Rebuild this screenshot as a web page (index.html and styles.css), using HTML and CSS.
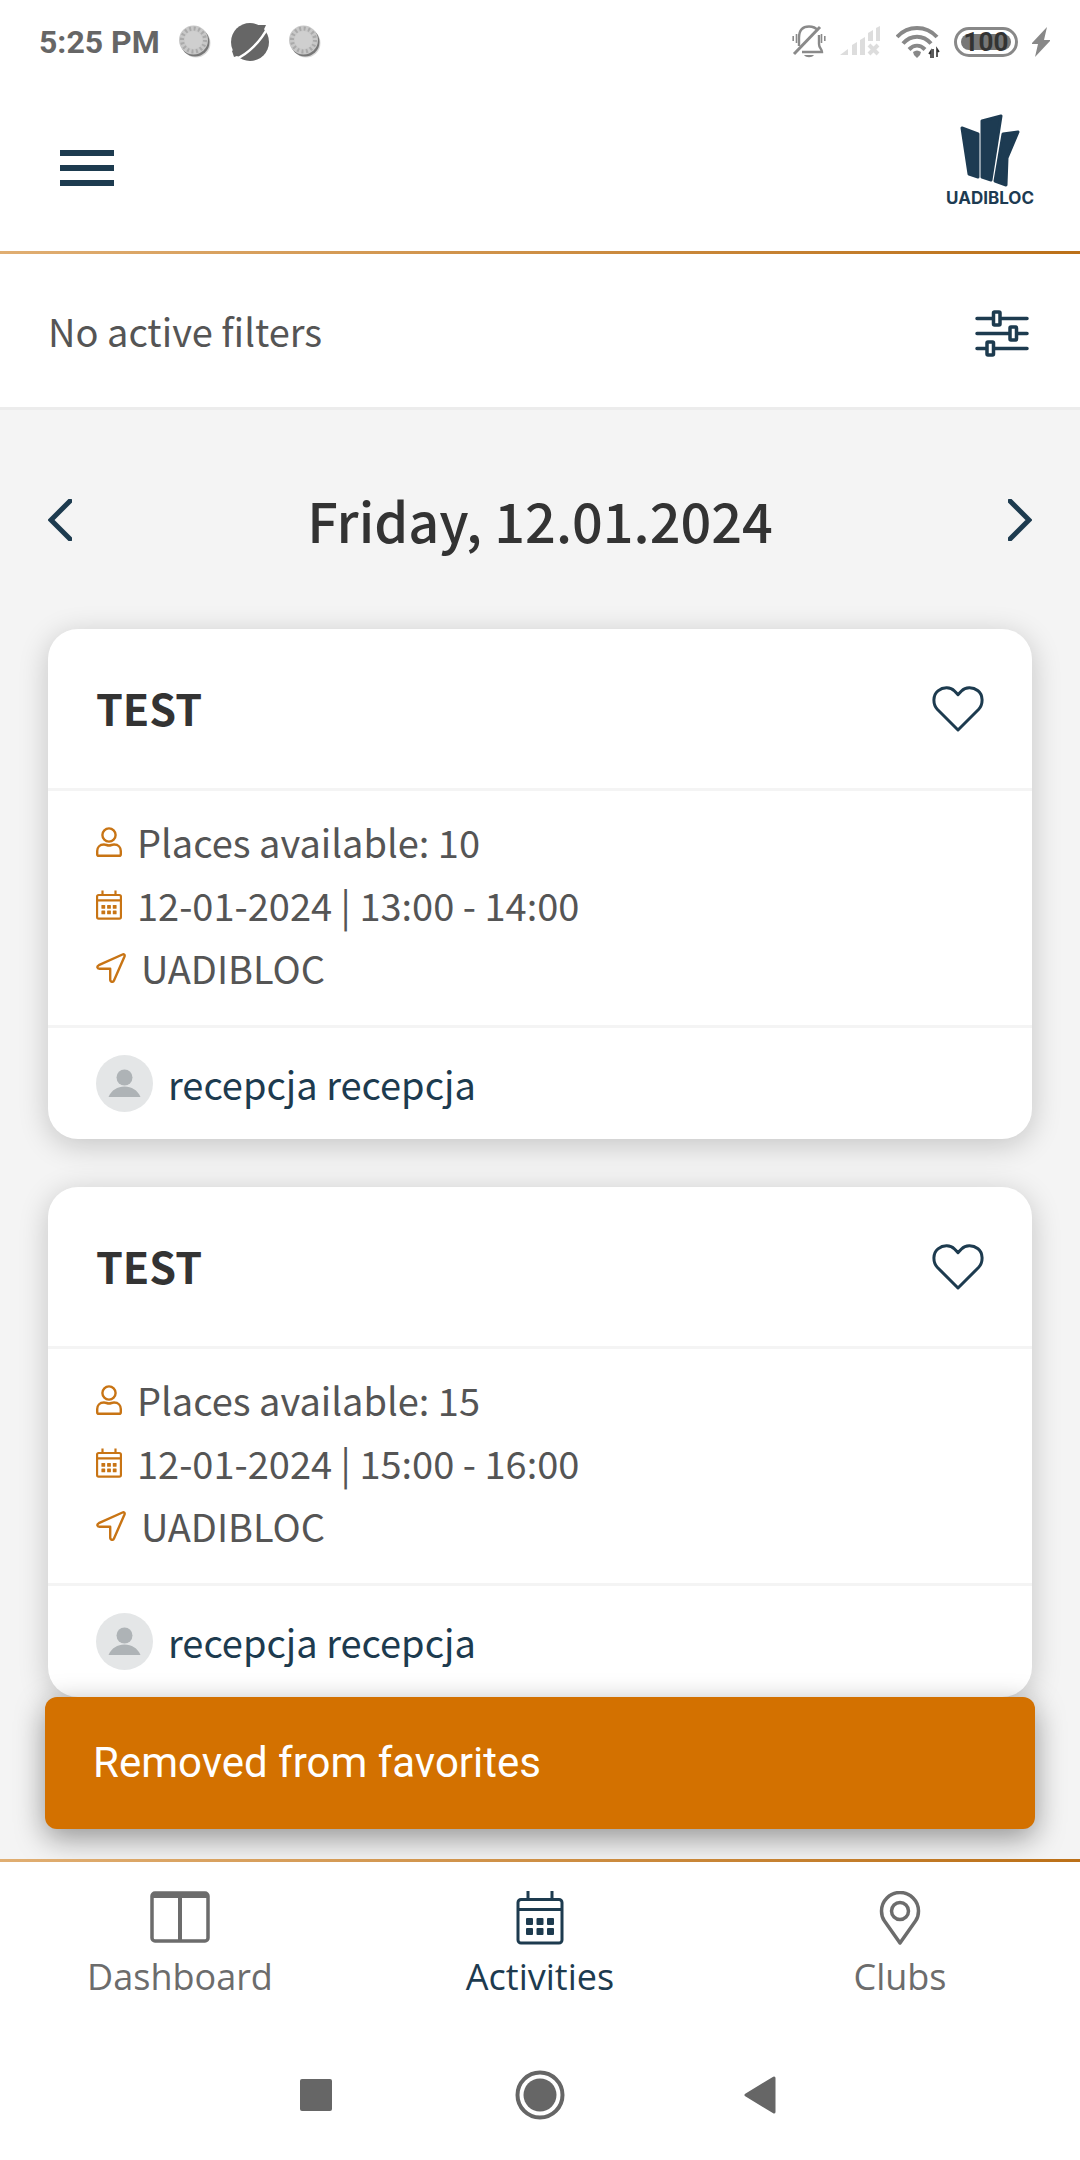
FILE: index.html
```
<!DOCTYPE html>
<html lang="en">
<head>
  <meta charset="UTF-8">
  <meta name="viewport" content="width=device-width, initial-scale=1.0">
  <title>Activities - UADIBLOC</title>
  <link rel="stylesheet" href="styles.css">
</head>
<body>
  <!-- shared icons -->
  <svg class="sprite" aria-hidden="true">
    <symbol id="user" viewBox="0 0 26 30">
      <g fill="none" stroke="currentColor" stroke-width="2.4">
        <circle cx="13" cy="8" r="6.6"/>
        <path d="M8 17.500c2 0 3 1 5 1s3-1 5-1c4.500 0 6.800 3.200 6.800 6.500v3.200c0 1-.6 1.600-1.600 1.600H2.800c-1 0-1.600-.6-1.600-1.600V24c0-3.300 2.300-6.500 6.800-6.500z"/>
      </g>
    </symbol>
    <symbol id="calendar" viewBox="0 0 48 54">
      <g fill="none" stroke="currentColor">
        <rect x="2" y="8.500" width="44" height="43.500" rx="3"/>
        <path d="M2 18.500h44M12 0v8M36 0v8"/>
      </g>
      <g fill="currentColor" stroke="none">
        <rect x="10" y="27" width="7" height="7" rx="1"/>
        <rect x="20.500" y="27" width="7" height="7" rx="1"/>
        <rect x="31" y="27" width="7" height="7" rx="1"/>
        <rect x="10" y="37" width="7" height="7" rx="1"/>
        <rect x="20.500" y="37" width="7" height="7" rx="1"/>
        <rect x="31" y="37" width="7" height="7" rx="1"/>
      </g>
    </symbol>
    <symbol id="arrow" viewBox="0 0 30 30">
      <path d="M26.500 1.500 2.800 12.200c-2.200 1.100-1.800 3.600.6 3.600h10.800v10.800c0 2.600 2.800 3 3.800.8L28.500 3.500c.6-1.500-.6-2.600-2-2z" fill="none" stroke="currentColor" stroke-width="2.4" stroke-linejoin="round"/>
    </symbol>
    <symbol id="heart" viewBox="0 0 52 46">
      <path d="M26 44 5.500 23.500C.5 18 .8 9 6 4.800 11.500 .5 18.500 1 22.500 5L26 8.600 29.500 5C33.500 1 40.500 .5 46 4.800 51.200 9 51.500 18 46.500 23.500z" fill="none" stroke="currentColor" stroke-width="3" stroke-linejoin="round"/>
    </symbol>
    <symbol id="avatar" viewBox="0 0 57 57">
      <circle cx="28.500" cy="28.500" r="28.500" fill="#e4e6e7"/>
      <circle cx="28.500" cy="22.500" r="8" fill="#aeb3b6"/>
      <path d="M12.500 42c3-7 9-10.500 16-10.500S41.500 35 44.500 42z" fill="#aeb3b6"/>
    </symbol>
    <symbol id="coin" viewBox="0 0 32 34">
      <circle cx="17" cy="18" r="14.500" fill="#d8d8d8"/>
      <circle cx="16" cy="17" r="14.500" fill="#777"/>
      <circle cx="14.500" cy="15" r="14.500" fill="#c8c8c8"/>
      <circle cx="14.500" cy="15" r="11.500" fill="none" stroke="#aaa" stroke-width="4" stroke-dasharray="2 2.500"/>
      <circle cx="14.500" cy="15" r="9" fill="#cfcfcf"/>
    </symbol>
  </svg>

  <div class="status-bar">
    <div class="status-left">
      <span class="clock">5:25 PM</span>
      <svg width="32" height="34"><use href="#coin"/></svg>
      <svg width="40" height="40" viewBox="0 0 40 40">
        <circle cx="20" cy="20" r="19" fill="#666"/>
        <path d="M6 37C18 32 31 19 38 5" fill="none" stroke="#fff" stroke-width="2.500"/>
        <path d="M2 29 4 35C17 31 30 18 36 3L28 3z" fill="#666"/>
      </svg>
      <svg width="32" height="34"><use href="#coin"/></svg>
    </div>
    <div class="status-right">
      <svg width="34" height="34" viewBox="0 0 34 34">
        <g fill="none" stroke="#8a8a8a" stroke-width="2.4">
          <path d="M7 21V13C7 5 11 1.500 17 1.500c4 0 7 1.500 9 4M27 10v9c0 4 3 5 3 8H10"/>
          <path d="M2 29 28 2" stroke-width="3"/>
          <path d="M1.200 11v5M4.500 9v9M29.500 9v9M32.800 11v5" stroke-width="1.6"/>
        </g>
        <path d="M12 30h10c-2 3-8 3-10 0z" fill="#8a8a8a"/>
      </svg>
      <svg width="42" height="32" viewBox="0 0 42 32">
        <path d="M0 29l8-6v6zM12 19l5-3v13h-5zM20 14l5-3v18h-5zM28 7l5-3v11h-5zM36 2l4-2v15h-4z" fill="#ddd"/>
        <path d="M29 19l9 9M38 19l-9 9" stroke="#ddd" stroke-width="4"/>
      </svg>
      <svg width="44" height="36" viewBox="0 0 44 36">
        <g fill="none" stroke="#888" stroke-width="4">
          <path d="M1 13C12 1 30 1 41 13M7 19.500c8-9 20-9 28 0M13 25.500c5-5 11-5 16 0"/>
        </g>
        <path d="M17 28q4-3 8 0l-1 3-3 3-3-3z" fill="#888"/>
        <path d="M35 34v-7l-2 3M37 25v9M41 33v-8l2 3" fill="none" stroke="#333" stroke-width="1.600"/>
      </svg>
      <span class="battery"><span class="battery-level">100</span></span>
      <svg width="18" height="30" viewBox="1 0 18 30">
        <path d="M16 0 0 17h7L4 30 20 13h-7z" fill="#888"/>
      </svg>
    </div>
  </div>

  <header class="header">
    <button class="menu-btn" aria-label="Menu">
      <span></span><span></span><span></span>
    </button>
    <a class="logo" href="#">
      <svg width="60" height="74" viewBox="0 0 60 74">
        <g fill="#1d3b52" stroke="#1d3b52" stroke-width="3" stroke-linejoin="round">
          <path d="M2 14 18 20V63L9 60z"/>
          <path d="M22 7 41 2 31 66 22 63z"/>
          <path d="M43 20 58 18 47 44 46 71 35 67z"/>
        </g>
      </svg>
      <span>UADIBLOC</span>
    </a>
  </header>

  <div class="filters">
    <span>No active filters</span>
    <button aria-label="Filters">
      <svg width="54" height="54" viewBox="0 -6 54 54">
        <path d="M2 8.500h50M2 23.500h50M2 38.500h50" stroke="#1d3b4f" stroke-width="3.500" stroke-linecap="round"/>
        <g fill="#fff" stroke="#1d3b4f" stroke-width="3.500">
          <rect x="18.500" y="2" width="6.500" height="13" rx="1"/>
          <rect x="35" y="17" width="6.500" height="13" rx="1"/>
          <rect x="12" y="32" width="6.500" height="13" rx="1"/>
        </g>
      </svg>
    </button>
  </div>

  <main class="content">
    <div class="date-nav">
      <button aria-label="Previous day">
        <svg width="24" height="42" viewBox="0 0 24 42"><path d="M22 2 3 21 22 40"/></svg>
      </button>
      <h1>Friday, 12.01.2024</h1>
      <button aria-label="Next day">
        <svg width="24" height="42" viewBox="0 0 24 42"><path d="M2 2 21 21 2 40"/></svg>
      </button>
    </div>

    <article class="card">
      <div class="card-head">
        <h2>TEST</h2>
        <button aria-label="Add to favorites"><svg width="52" height="46"><use href="#heart"/></svg></button>
      </div>
      <ul class="card-info">
        <li><svg width="26" height="30"><use href="#user"/></svg>Places available: 10</li>
        <li><svg width="26" height="30"><use href="#calendar"/></svg>12-01-2024 | 13:00 - 14:00</li>
        <li><svg width="30" height="30"><use href="#arrow"/></svg>UADIBLOC</li>
      </ul>
      <a class="card-trainer" href="#">
        <svg width="57" height="57"><use href="#avatar"/></svg>
        recepcja recepcja
      </a>
    </article>

    <article class="card">
      <div class="card-head">
        <h2>TEST</h2>
        <button aria-label="Add to favorites"><svg width="52" height="46"><use href="#heart"/></svg></button>
      </div>
      <ul class="card-info">
        <li><svg width="26" height="30"><use href="#user"/></svg>Places available: 15</li>
        <li><svg width="26" height="30"><use href="#calendar"/></svg>12-01-2024 | 15:00 - 16:00</li>
        <li><svg width="30" height="30"><use href="#arrow"/></svg>UADIBLOC</li>
      </ul>
      <a class="card-trainer" href="#">
        <svg width="57" height="57"><use href="#avatar"/></svg>
        recepcja recepcja
      </a>
    </article>

    <div class="toast" role="status">Removed from favorites</div>
  </main>

  <nav class="tabs">
    <a href="#">
      <svg width="60" height="54" viewBox="0 0 60 54">
        <rect x="2" y="2" width="56" height="48" rx="3" fill="none" stroke="currentColor" stroke-width="3.500"/>
        <path d="M30 4v46M2 5h56" stroke="currentColor" stroke-width="4"/>
      </svg>
      Dashboard
    </a>
    <a class="active" href="#">
      <svg width="48" height="54"><use href="#calendar"/></svg>
      Activities
    </a>
    <a href="#">
      <svg width="42" height="54" viewBox="0 0 42 54">
        <g fill="none" stroke="currentColor" stroke-width="3.500" stroke-linejoin="round">
          <path d="M21 52 5.500 30C2.500 26 2.500 23 2.500 20a18.500 18.500 0 0 1 37 0c0 3 0 6-3 10z"/>
          <circle cx="21" cy="20" r="8.500"/>
        </g>
      </svg>
      Clubs
    </a>
  </nav>

  <div class="system-bar">
    <button aria-label="Recent apps">
      <svg width="50" height="50" viewBox="0 0 50 50"><rect x="9" y="9" width="32" height="32" rx="2" fill="#666"/></svg>
    </button>
    <button aria-label="Home">
      <svg width="50" height="50" viewBox="0 0 50 50">
        <circle cx="25" cy="25" r="22.500" fill="none" stroke="#666" stroke-width="4"/>
        <circle cx="25" cy="25" r="16.500" fill="#666"/>
      </svg>
    </button>
    <button aria-label="Back">
      <svg width="50" height="50" viewBox="0 0 50 50"><path d="M7 25 35 8V42z" fill="#666" stroke="#666" stroke-width="3" stroke-linejoin="round"/></svg>
    </button>
  </div>
</body>
</html>
```

FILE: styles.css
```
* {
  box-sizing: border-box;
}
body {
  margin: 0;
  min-height: 100vh;
  display: flex;
  flex-direction: column;
  background: #fff;
  color: #555;
  font-family: "Noto Sans CJK SC", "Noto Sans", sans-serif;
  font-size: 38px;
}
h1, h2, ul {
  margin: 0;
  padding: 0;
}
button {
  padding: 0;
  border: 0;
  background: none;
  color: inherit;
  cursor: pointer;
}
a {
  color: inherit;
  text-decoration: none;
}
svg {
  display: block;
  flex-shrink: 0;
}
.sprite {
  position: absolute;
  width: 0;
  height: 0;
}

/* phone status bar */
.status-bar {
  display: flex;
  justify-content: space-between;
  align-items: center;
  height: 84px;
  padding: 0 30px 0 39px;
}
.status-left {
  display: flex;
  align-items: center;
  gap: 19px;
}
.clock {
  color: #666;
  font-family: Roboto, sans-serif;
  font-size: 32px;
  font-weight: 700;
  line-height: 40px;
}
.status-right {
  display: flex;
  align-items: center;
  gap: 14px;
}
.battery {
  width: 64px;
  height: 30px;
  padding: 4px;
  border: 3px solid #888;
  border-radius: 15px;
}
.battery-level {
  display: block;
  border-radius: 8px;
  background: #777;
  color: #333;
  font-family: Roboto, sans-serif;
  font-size: 26px;
  font-weight: 700;
  line-height: 16px;
  text-align: center;
}

/* header */
.header {
  display: flex;
  justify-content: space-between;
  align-items: center;
  height: 170px;
  padding: 0 46px 0 60px;
  border-bottom: 3px solid;
  border-image: linear-gradient(90deg, #e0ae72, #bb7018) 1;
}
.menu-btn {
  display: flex;
  flex-direction: column;
  gap: 9px;
}
.menu-btn span {
  width: 54px;
  height: 6px;
  background: #1d3b4f;
}
.logo {
  display: flex;
  flex-direction: column;
  align-items: center;
  padding-bottom: 14px;
  color: #1d3b52;
  font-family: Inter, sans-serif;
  font-size: 17px;
  font-weight: 700;
  line-height: 20px;
}

.filters {
  display: flex;
  justify-content: space-between;
  align-items: center;
  height: 156px;
  padding: 0 51px 0 48px;
  border-bottom: 3px solid #ececec;
}

/* activities list */
.content {
  position: relative;
  flex: 1;
  padding: 72px 48px 0;
  background: #f4f4f4;
  overflow: hidden;
}
.date-nav {
  display: flex;
  justify-content: space-between;
  align-items: center;
  height: 76px;
  margin-bottom: 71px;
}
.date-nav path {
  fill: none;
  stroke: #1d3b4f;
  stroke-width: 5px;
  stroke-linecap: round;
}
h1 {
  color: #333;
  font-size: 54px;
  font-weight: 500;
  line-height: 76px;
}
.card {
  margin-bottom: 48px;
  border-radius: 30px;
  background: #fff;
  box-shadow: 0 6px 30px rgba(0, 0, 0, 0.2);
}
.card-head {
  display: flex;
  justify-content: space-between;
  align-items: center;
  height: 162px;
  padding: 0 48px;
  border-bottom: 3px solid #f4f4f4;
}
.card-head button {
  color: #1d3b4f;
}
h2 {
  padding-bottom: 4px;
  color: #333;
  font-size: 43px;
  font-weight: 700;
  line-height: 64px;
}
.card-info {
  padding: 19px 48px 26px;
  border-bottom: 3px solid #f4f4f4;
  list-style: none;
}
.card-info li {
  display: flex;
  align-items: center;
  gap: 15px;
  line-height: 63px;
}
.card-info svg {
  color: #c87414;
  stroke-width: 4px;
}
.card-trainer {
  display: flex;
  align-items: center;
  gap: 15px;
  height: 111px;
  padding: 0 48px;
  color: #1d3b4f;
}
.toast {
  position: absolute;
  left: 45px;
  right: 45px;
  bottom: 30px;
  padding: 0 48px;
  border-radius: 12px;
  background: #d37100;
  box-shadow: 0 9px 30px rgba(0, 0, 0, 0.4);
  color: #fff;
  font-family: Roboto, sans-serif;
  font-size: 42px;
  line-height: 132px;
}

/* bottom navigation */
.tabs {
  display: grid;
  grid-template-columns: repeat(3, 1fr);
  padding: 29px 0;
  border-top: 3px solid;
  border-image: linear-gradient(90deg, #e0ae72, #bb7018) 1;
  color: #6c6c6c;
  font-family: "Open Sans", "Noto Sans", sans-serif;
  font-size: 36px;
  line-height: 48px;
}
.tabs a {
  display: flex;
  flex-direction: column;
  align-items: center;
  gap: 8px;
}
.tabs svg {
  stroke-width: 3px;
}
.tabs .active {
  color: #1d3b4f;
}
.system-bar {
  display: flex;
  justify-content: center;
  align-items: center;
  gap: 174px;
  height: 130px;
}
```
